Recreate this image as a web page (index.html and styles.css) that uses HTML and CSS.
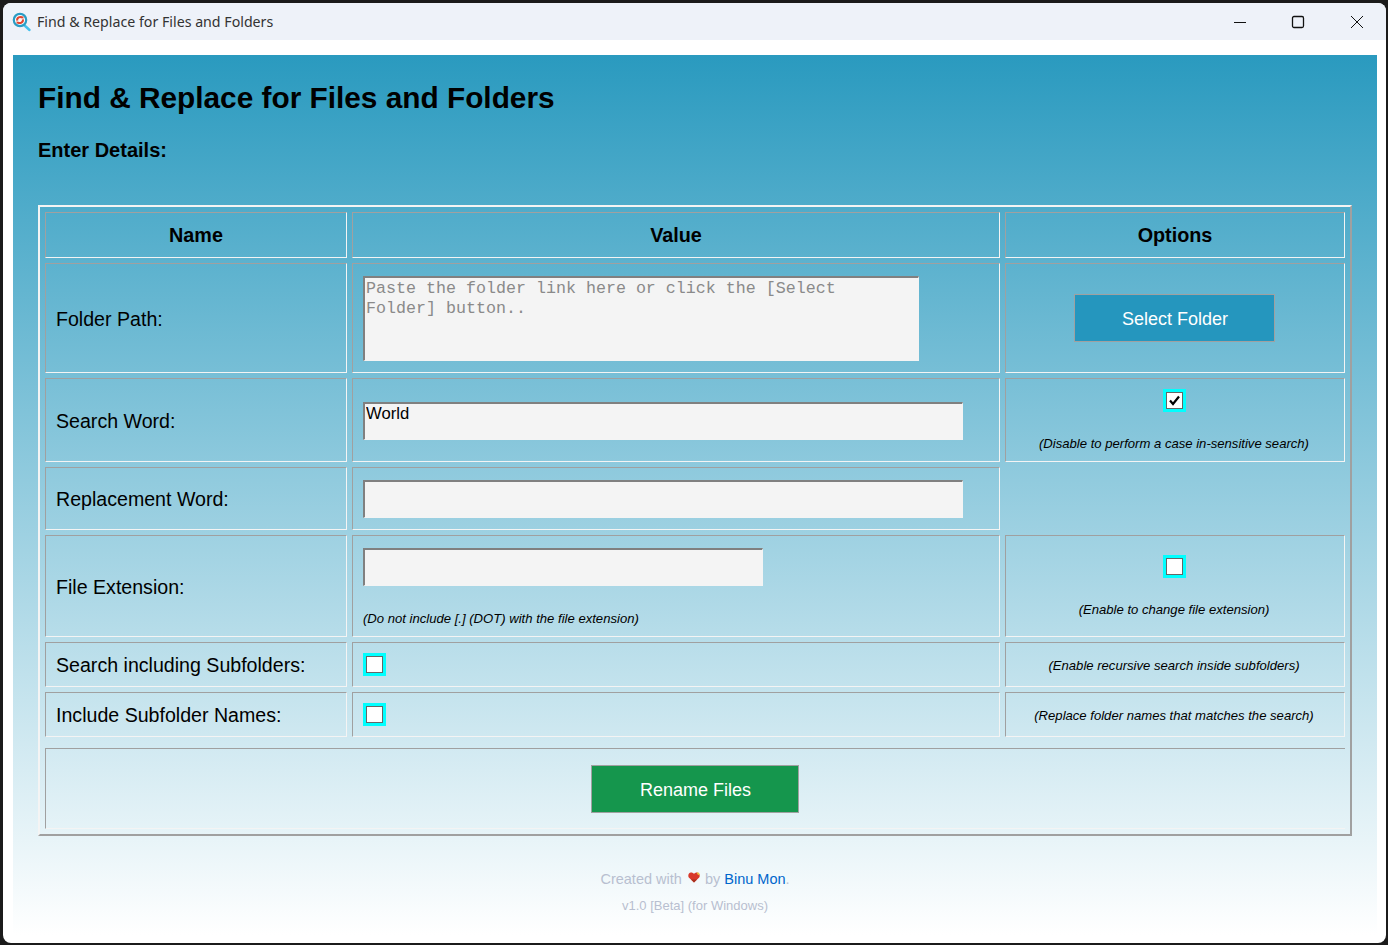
FILE: index.html
```html
<!DOCTYPE html>
<html lang="en">
<head>
    <meta charset="UTF-8">
    <meta name="viewport" content="width=device-width, initial-scale=1.0">
    <title>Find &amp; Replace for Files and Folders</title>
    <link rel="stylesheet" href="styles.css">
</head>
<body>
    <div class="window">
        <div class="titlebar">
            <svg class="app-icon" width="20" height="20" viewBox="0 0 20 20">
                <path d="M11.5 12.5 L17.5 18" stroke="#45c0ec" stroke-width="2.4" stroke-linecap="round" fill="none"/>
                <circle cx="8" cy="8" r="6.2" fill="#f6fbfd" stroke="#2b9cc4" stroke-width="2.2"/>
                <path d="M5.2 8.6 A3 3 0 0 1 10.2 5.8" stroke="#e2452f" stroke-width="2" fill="none"/>
                <path d="M10.9 7.4 A3 3 0 0 1 5.9 10.2" stroke="#e2452f" stroke-width="2" fill="none"/>
                <path d="M9 4.6 L11.6 4.6 L11.2 7.2 Z M7 11.4 L4.4 11.4 L4.8 8.8 Z" fill="#e2452f"/>
            </svg>
            <span class="window-title">Find &amp; Replace for Files and Folders</span>
            <div class="controls">
                <div class="control">
                    <svg width="14" height="14" viewBox="0 0 14 14"><path d="M1 7.5 H13" stroke="#111" stroke-width="1" fill="none"/></svg>
                </div>
                <div class="control">
                    <svg width="14" height="14" viewBox="0 0 14 14"><rect x="1.5" y="1.5" width="11" height="11" rx="1.5" stroke="#111" stroke-width="1.3" fill="none"/></svg>
                </div>
                <div class="control control-close">
                    <svg width="14" height="14" viewBox="0 0 14 14"><path d="M1 1 L13 13 M13 1 L1 13" stroke="#111" stroke-width="1" fill="none"/></svg>
                </div>
            </div>
        </div>

        <div class="content">
            <div class="panel">
                <h1>Find &amp; Replace for Files and Folders</h1>
                <h3>Enter Details:</h3>

                <table class="details">
                    <colgroup>
                        <col class="col-name">
                        <col class="col-value">
                        <col class="col-options">
                    </colgroup>
                    <tr class="row-head">
                        <th>Name</th>
                        <th>Value</th>
                        <th>Options</th>
                    </tr>
                    <tr class="row-path">
                        <td class="name">Folder Path:</td>
                        <td><textarea class="path-box" placeholder="Paste the folder link here or click the [Select Folder] button.."></textarea></td>
                        <td class="opt"><button class="btn btn-blue" type="button">Select Folder</button></td>
                    </tr>
                    <tr class="row-search">
                        <td class="name">Search Word:</td>
                        <td class="stack"><input class="word-box" type="text" value="World"></td>
                        <td class="opt stack-hint">
                            <input class="check" type="checkbox" checked>
                            <p class="hint hint-opt">(Disable to perform a case in-sensitive search)</p>
                        </td>
                    </tr>
                    <tr class="row-replace">
                        <td class="name">Replacement Word:</td>
                        <td><input class="word-box" type="text"></td>
                        <td></td>
                    </tr>
                    <tr class="row-ext">
                        <td class="name">File Extension:</td>
                        <td class="stack-hint">
                            <input class="word-box ext-box" type="text">
                            <p class="hint hint-value">(Do not include [.] (DOT) with the file extension)</p>
                        </td>
                        <td class="opt stack-hint">
                            <input class="check" type="checkbox">
                            <p class="hint hint-opt">(Enable to change file extension)</p>
                        </td>
                    </tr>
                    <tr class="row-flag">
                        <td class="name">Search including Subfolders:</td>
                        <td><input class="check" type="checkbox"></td>
                        <td class="opt"><p class="hint">(Enable recursive search inside subfolders)</p></td>
                    </tr>
                    <tr class="row-flag">
                        <td class="name">Include Subfolder Names:</td>
                        <td><input class="check" type="checkbox"></td>
                        <td class="opt"><p class="hint">(Replace folder names that matches the search)</p></td>
                    </tr>
                    <tr class="row-spacer"><td colspan="3"></td></tr>
                    <tr class="row-submit">
                        <td colspan="3"><button class="btn btn-green" type="button">Rename Files</button></td>
                    </tr>
                </table>

                <div class="footer">
                    <p class="credit">Created with
                        <svg class="heart" width="12" height="11" viewBox="0 0 12 11">
                            <path d="M6 10.5 L0.8 5.6 C-0.4 3.4 0.6 0.6 3 0.5 C4.4 0.5 5.4 1 6 2 C6.6 1 7.6 0.5 9 0.5 C11.4 0.6 12.4 3.4 11.2 5.6 Z" fill="#d8392b"/>
                            <path d="M6 10.5 L3 7.6 L9 7.6 Z" fill="#a8321f"/>
                            <path d="M8.6 0.5 L11 0.8 L11.8 3.4 L9.6 2.6 Z" fill="#f2c23c"/>
                        </svg>
                        by <a href="#">Binu Mon</a>.</p>
                    <p class="version">v1.0 [Beta] (for Windows)</p>
                </div>
            </div>
        </div>
    </div>
</body>
</html>
```

FILE: styles.css
```css
html, body {
    height: 100%;
}
body {
    margin: 0;
    background-color: #1b1b1b;
    font-family: "Liberation Sans", Arial, sans-serif;
    box-sizing: border-box;
    padding: 3px 2px 2px 3px;
}
.window {
    height: 100%;
    display: flex;
    flex-direction: column;
    background-color: white;
    border-radius: 8px;
    overflow: hidden;
}
.titlebar {
    height: 37px;
    flex: none;
    display: flex;
    align-items: center;
    background-color: #eef2f9;
    padding-left: 9px;
}
.app-icon {
    margin-right: 5px;
    margin-top: 1px;
}
.window-title {
    font-family: "Noto Sans", sans-serif;
    font-size: 14.2px;
    color: #333;
    flex: 1;
}
.controls {
    display: flex;
}
.control {
    width: 58px;
    height: 37px;
    display: flex;
    align-items: center;
    justify-content: center;
}
.control-close {
    margin-left: 1px;
}
.content {
    flex: 1;
    display: flex;
    padding: 15px 9px 8px 10px;
    min-height: 0;
}
.panel {
    flex: 1;
    padding: 24px 25px 0;
    background: linear-gradient(to bottom, #2a9abf, #ffffff);
}
h1 {
    margin: 0;
    font-size: 29.8px;
    line-height: 37px;
    color: black;
}
h3 {
    margin: 23px 0 0;
    font-size: 20px;
    line-height: 23px;
    color: black;
}

.details {
    margin-top: 43px;
    width: 1314px;
    table-layout: fixed;
    border-collapse: separate;
    border-spacing: 5px;
    empty-cells: hide;
    border-style: solid;
    border-width: 2px;
    border-color: #f4f4f4 #a0a0a0 #a0a0a0 #f4f4f4;
}
.col-name { width: 302px; }
.col-value { width: 648px; }
.col-options { width: 340px; }
th, td {
    box-sizing: border-box;
    border-style: solid;
    border-width: 1px;
    border-color: #a0a0a0 #f4f4f4 #f4f4f4 #a0a0a0;
    padding: 0 10px;
    font-size: 19.6px;
    color: black;
}
th {
    font-size: 19.8px;
    font-weight: bold;
    text-align: center;
}
td.name {
    padding-top: 2px;
}
.row-head th { height: 46px; }
.row-path td { height: 110px; }
.row-search td { height: 84px; }
.row-replace td { height: 63px; }
.row-ext td { height: 102px; }
.row-flag td { height: 45px; }
.row-spacer td {
    height: 1px;
    padding: 0;
    border: none;
}
.row-submit td {
    height: 81px;
    padding-right: 12px;
    text-align: center;
    border-right: none;
}
.opt {
    padding: 0 11px 0 9px;
    text-align: center;
}
.stack {
    padding-top: 2px;
}
.stack-hint {
    padding-top: 3px;
}

textarea, .word-box {
    display: block;
    box-sizing: border-box;
    margin: 0;
    background-color: #f4f4f4;
    border-style: solid;
    border-width: 2px 1px 1px 2px;
    border-color: #808080 #f4f4f4 #f4f4f4 #808080;
    outline: none;
    color: black;
    font-size: 16.67px;
}
.path-box {
    width: 556px;
    height: 85px;
    padding: 1px 20px 1px 1px;
    resize: none;
    overflow: hidden;
    font-family: "Liberation Mono", "Courier New", monospace;
    line-height: 20px;
}
.path-box::placeholder {
    color: #8a8a8a;
}
.word-box {
    width: 600px;
    height: 38px;
    padding: 0 2px 15px 1px;
    font-family: "Liberation Sans", Arial, sans-serif;
}
.ext-box {
    width: 400px;
}

.check {
    appearance: none;
    display: block;
    box-sizing: border-box;
    width: 17px;
    height: 17px;
    margin: 0 0 0 3px;
    background-color: white;
    border: 1px solid #666;
    outline: 3px solid #00ffff;
}
.check:checked {
    background-image: url("data:image/svg+xml,%3Csvg xmlns='http://www.w3.org/2000/svg' viewBox='0 0 15 15'%3E%3Cpath d='M3 7.5 L6 11 L12 3.5' stroke='%23000' stroke-width='2.2' fill='none'/%3E%3C/svg%3E");
}
.opt .check {
    margin: 0 auto;
}
.hint {
    margin: 0;
    font-size: 13.1px;
    line-height: 16px;
    font-style: italic;
    color: black;
}
.hint-opt {
    margin-top: 27px;
}
.hint-value {
    margin-top: 25px;
}
.row-flag .hint {
    padding-top: 2px;
}

.btn {
    height: 48px;
    padding: 3px 5px 0 7px;
    border: 1px solid #a0a0a0;
    color: white;
    font-family: "Liberation Sans", Arial, sans-serif;
    font-size: 18px;
    cursor: pointer;
}
.btn-blue {
    width: 201px;
    background-color: #2596be;
}
.btn-green {
    width: 208px;
    background-color: #15964d;
}

.footer {
    margin-top: 33px;
    text-align: center;
    color: #b8bfd0;
}
.credit {
    margin: 0;
    font-size: 14.5px;
    line-height: 20px;
}
.credit a {
    color: #0066cc;
    text-decoration: none;
}
.heart {
    vertical-align: 1px;
    margin: 0 1px 0 2px;
}
.version {
    margin: 9px 0 0;
    font-size: 13px;
    line-height: 16px;
}
```
